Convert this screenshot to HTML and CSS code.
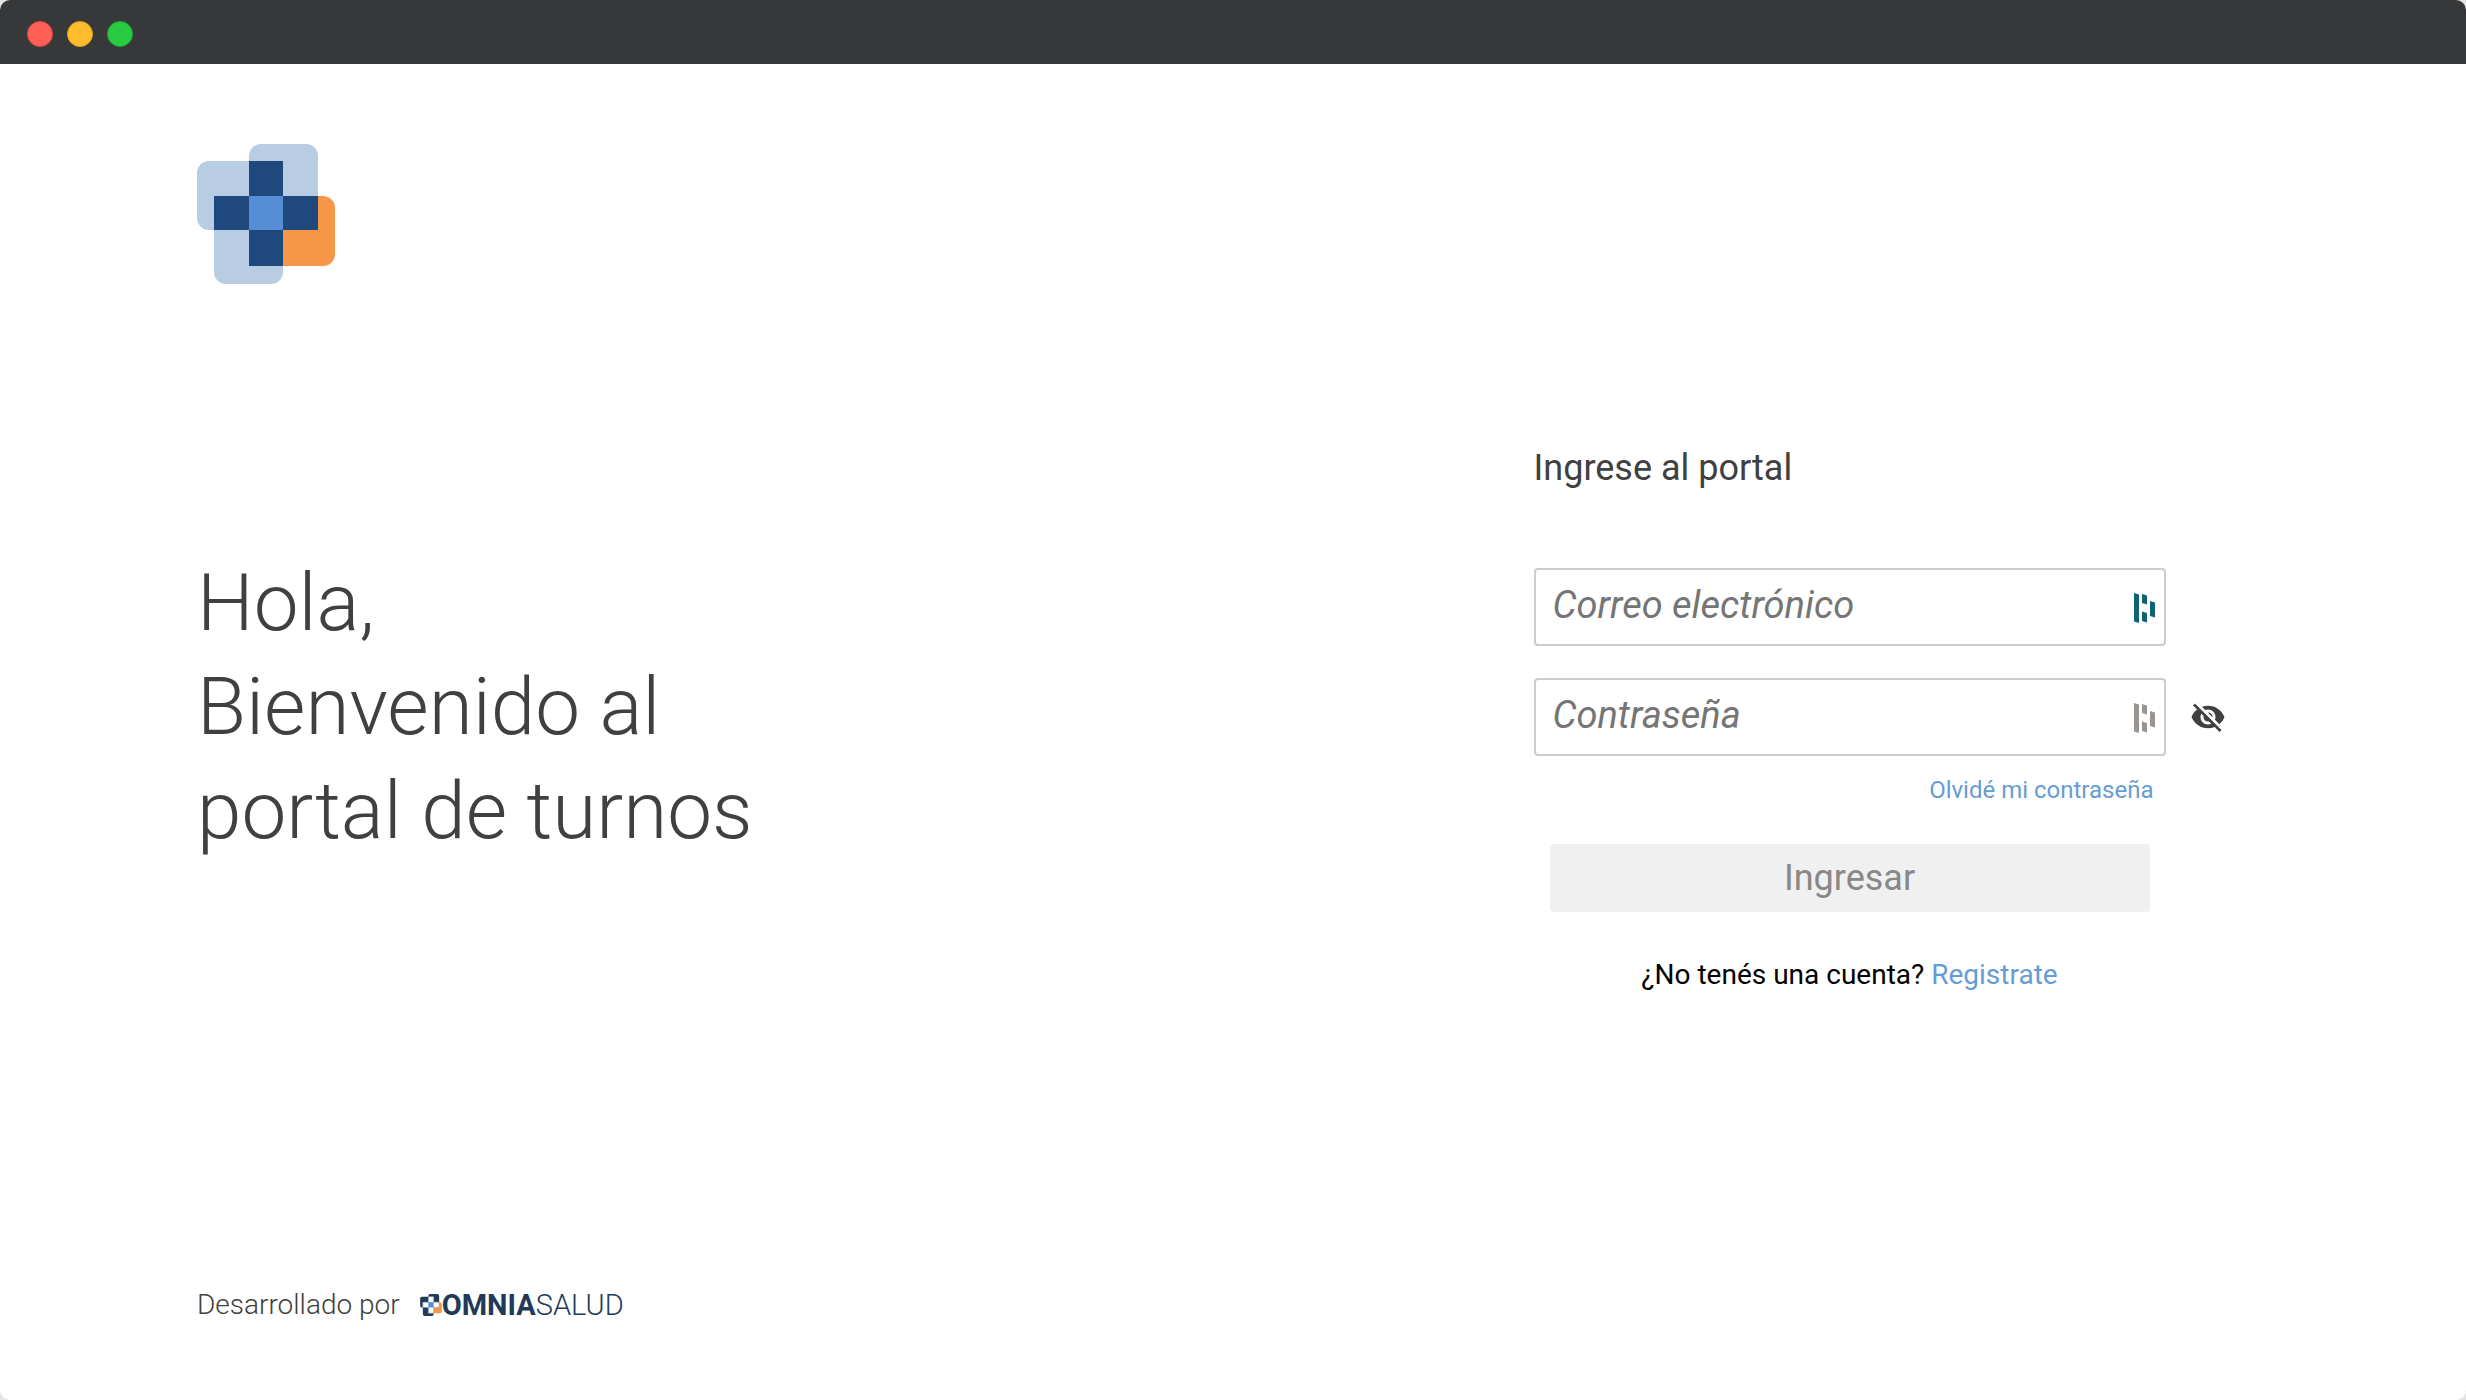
FILE: index.html
```html
<!DOCTYPE html>
<html lang="es">
<head>
<meta charset="utf-8">
<title>Portal de turnos</title>
<link rel="stylesheet" href="styles.css">
</head>
<body>
<div class="window">
  <header class="titlebar">
    <span class="dot dot-red"></span>
    <span class="dot dot-yellow"></span>
    <span class="dot dot-green"></span>
  </header>
  <main class="page">
    <section class="intro">
      <svg class="logo" viewBox="0 0 138 140" aria-hidden="true">
        <g fill="#b8cce4">
          <rect x="0" y="17" width="69" height="69" rx="12"/>
          <rect x="52" y="0" width="69" height="69" rx="12"/>
          <rect x="17" y="71" width="69" height="69" rx="12"/>
        </g>
        <rect x="69" y="52" width="69" height="70" rx="12" fill="#f79646"/>
        <path fill="#1f497d" d="M52 17h34v35h35v34H86v36H52V86H17V52h35z"/>
        <path fill="#558ed5" d="M52 52h34v34H52z"/>
      </svg>
      <h1 class="welcome">Hola,<br>Bienvenido al<br>portal de turnos</h1>
      <footer class="credits">
        <span>Desarrollado por</span>
        <span class="brand">
          <svg class="brand-mark" viewBox="0 0 138 140" aria-hidden="true">
            <g fill="#213a57">
              <rect x="0" y="17" width="69" height="69" rx="12"/>
              <rect x="52" y="0" width="69" height="69" rx="12"/>
              <rect x="17" y="71" width="69" height="69" rx="12"/>
            </g>
            <rect x="69" y="52" width="69" height="70" rx="12" fill="#f79646"/>
            <path fill="#fff" stroke="#8f9dad" stroke-width="4" d="M52 17h34v35h35v34H86v36H52V86H17V52h35z"/>
            <path fill="#558ed5" d="M52 52h34v34H52z"/>
          </svg>
          <span class="brand-name"><b>OMNIA</b>SALUD</span>
        </span>
      </footer>
    </section>
    <form class="login">
      <h2 class="login-title">Ingrese al portal</h2>
      <div class="field field-email">
        <input class="text-input" type="email" placeholder="Correo electrónico" aria-label="Correo electrónico">
        <svg class="manager manager-on" viewBox="0 0 22 30" aria-hidden="true"><path d="M0 0l5 1.500v28.500l-5-1.500zM8 1l5 1.500v9l-5-1.500zM8 18.500l5 1.500v9.500l-5-1.500zM16 8l5 1.500v15l-5-1.500z"/></svg>
      </div>
      <div class="field field-password">
        <input class="text-input" type="password" placeholder="Contraseña" aria-label="Contraseña">
        <svg class="manager" viewBox="0 0 22 30" aria-hidden="true"><path d="M0 0l5 1.500v28.500l-5-1.500zM8 1l5 1.500v9l-5-1.500zM8 18.500l5 1.500v9.500l-5-1.500zM16 8l5 1.500v15l-5-1.500z"/></svg>
      </div>
      <button class="reveal" type="button" aria-label="Mostrar contraseña">
        <svg viewBox="0 0 24 24" width="36" height="36" aria-hidden="true"><path fill="#404040" d="M12 7c2.760 0 5 2.240 5 5 0 .65-.13 1.260-.36 1.830l2.920 2.920c1.510-1.260 2.700-2.890 3.430-4.750-1.730-4.390-6-7.500-11-7.500-1.400 0-2.740.25-3.980.7l2.160 2.160C10.740 7.130 11.350 7 12 7zM2 4.270l2.280 2.280.46.46C3.080 8.300 1.780 10.020 1 12c1.730 4.390 6 7.500 11 7.500 1.550 0 3.030-.3 4.380-.84l.42.42L19.730 22 21 20.730 3.270 3 2 4.270zM7.530 9.800l1.550 1.550c-.05.21-.08.43-.08.65 0 1.660 1.340 3 3 3 .22 0 .44-.03.65-.08l1.550 1.550c-.67.33-1.410.53-2.200.53-2.760 0-5-2.240-5-5 0-.79.2-1.530.53-2.200zm4.310-.78l3.150 3.150.02-.16c0-1.660-1.340-3-3-3l-.17.01z"/></svg>
      </button>
      <a class="forgot" href="#">Olvidé mi contraseña</a>
      <button class="submit" type="submit" disabled>Ingresar</button>
      <p class="signup">¿No tenés una cuenta? <a href="#">Registrate</a></p>
    </form>
  </main>
</div>
</body>
</html>
```
FILE: styles.css
```css
* {
  box-sizing: border-box;
}

body {
  margin: 0;
  background: #e4e4e4;
  color: #404040;
  font-family: Roboto, "Liberation Sans", sans-serif;
}

h1,
h2,
p {
  margin: 0;
  font-weight: 400;
}

a {
  color: #669cd4;
  text-decoration: none;
}

.window {
  display: flex;
  flex-direction: column;
  min-height: 100vh;
  overflow: hidden;
  border-radius: 10px;
  background: #fff;
}

.titlebar {
  display: flex;
  align-items: center;
  gap: 14px;
  height: 64px;
  padding: 4px 27px 0;
  background: #37383a;
}

.dot {
  width: 26px;
  height: 26px;
  border: 1px solid;
  border-radius: 50%;
}

.dot-red {
  background: #ff5f57;
  border-color: #e14942;
}

.dot-yellow {
  background: #ffbd2e;
  border-color: #e1a325;
}

.dot-green {
  background: #28ca42;
  border-color: #1fa833;
}

.page {
  display: grid;
  grid-template-columns: 1fr 1fr;
  flex: 1;
}

.intro {
  display: flex;
  flex-direction: column;
  padding: 80px 0 77px 197px;
}

.logo {
  width: 138px;
  height: 140px;
}

.welcome {
  margin-top: 267px;
  font-size: 80px;
  line-height: 104px;
  font-weight: 300;
}

.credits {
  display: flex;
  align-items: center;
  gap: 20px;
  margin-top: auto;
  font-size: 28px;
  line-height: 36px;
  font-weight: 300;
}

.brand {
  display: flex;
  align-items: center;
  color: #213a57;
}

.brand-mark {
  width: 22px;
  height: 22px;
}

.brand-name {
  font-size: 29px;
}

.brand-name b {
  font-weight: 700;
}

.login {
  display: grid;
  grid-template-columns: 1fr 632px 1fr;
  align-content: start;
  padding-top: 380px;
}

.login > * {
  grid-column: 2;
}

.login-title {
  margin-bottom: 76px;
  font-size: 36px;
  line-height: 48px;
}

.field {
  display: grid;
  align-items: center;
}

.field > * {
  grid-area: 1 / 1;
}

.field-password {
  grid-row: 3;
}

.field-email {
  margin-bottom: 32px;
}

.text-input {
  width: 100%;
  height: 78px;
  padding: 0 60px 4px 17px;
  border: 2px solid #ccc;
  border-radius: 4px;
  background: #fff;
  color: #404040;
  font: 400 38px Roboto, "Liberation Sans", sans-serif;
}

.text-input::placeholder {
  color: #757575;
  font-style: italic;
}

.manager {
  justify-self: end;
  width: 22px;
  height: 30px;
  margin: 2px 10px 0 0;
  fill: #9b9591;
}

.manager-on {
  fill: #0e6273;
}

.login > .reveal {
  grid-column: 3;
  grid-row: 3;
  place-self: center start;
  display: flex;
  margin-left: 24px;
  padding: 0;
  border: 0;
  background: none;
}

.forgot {
  justify-self: end;
  margin: 18px 12px 0 0;
  font-size: 24px;
  line-height: 32px;
}

.submit {
  height: 68px;
  margin: 38px 16px 0;
  padding: 0;
  border: 0;
  border-radius: 4px;
  background: #f0f0f0;
  color: #888;
  font: 400 36px Roboto, "Liberation Sans", sans-serif;
}

.signup {
  margin-top: 45px;
  color: #000;
  font-size: 28px;
  line-height: 36px;
  text-align: center;
}
```
